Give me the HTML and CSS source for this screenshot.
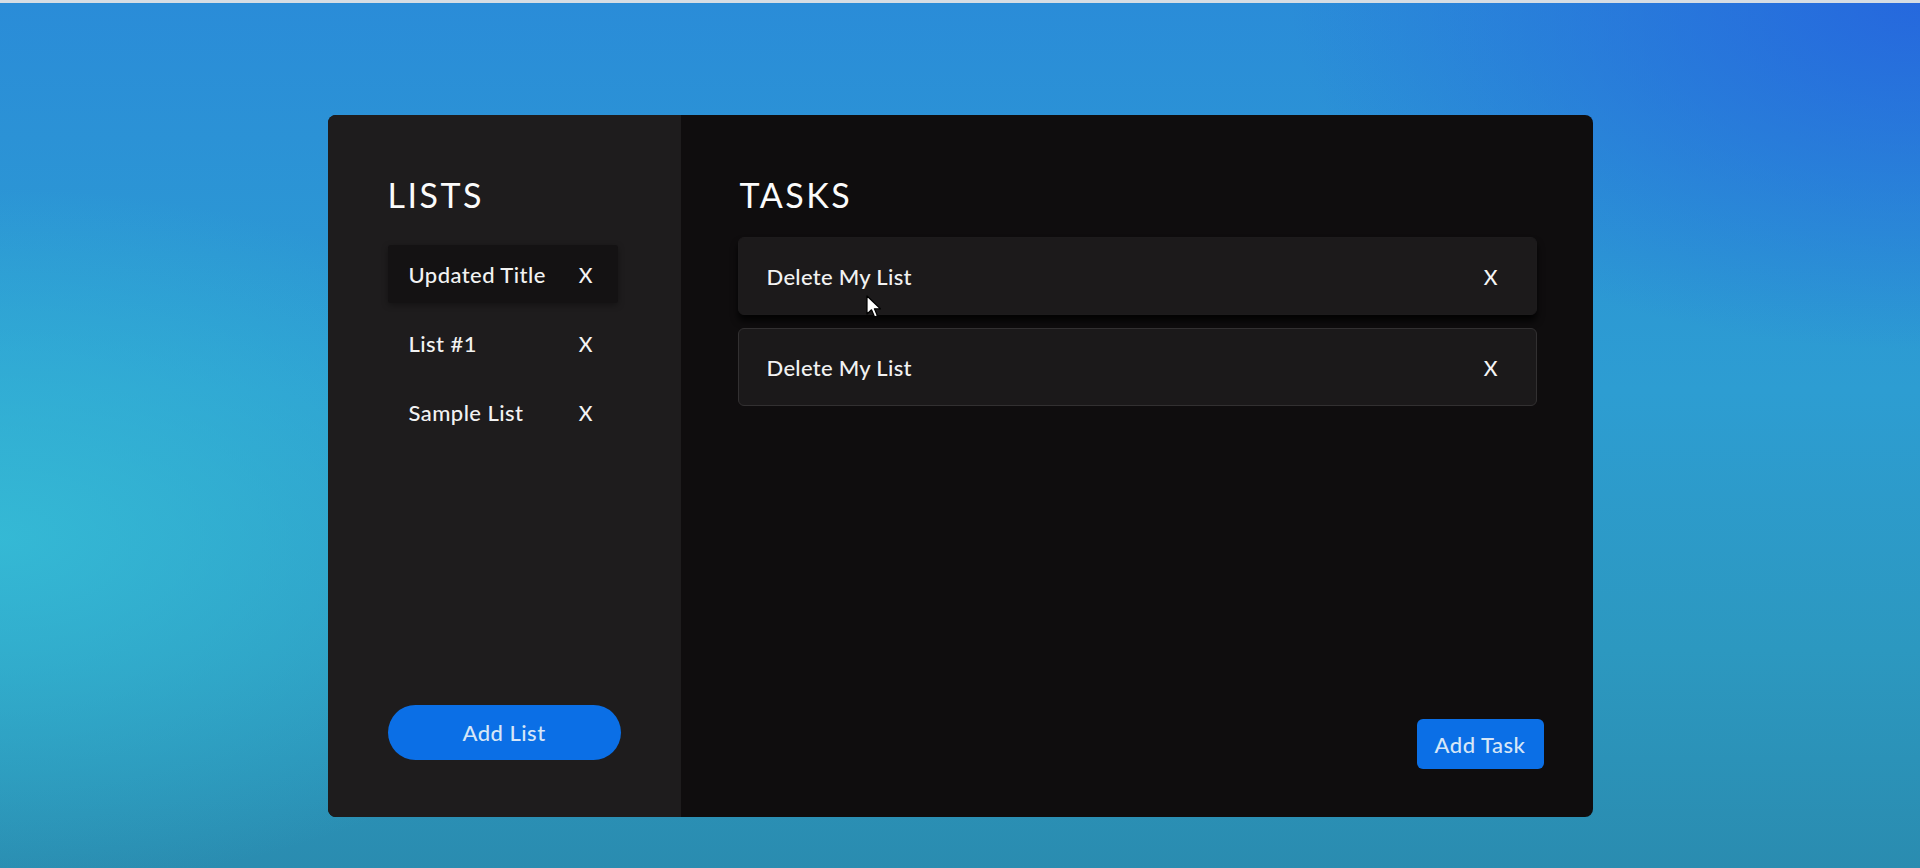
FILE: index.html
```html
<!DOCTYPE html>
<html lang="en">
<head>
<meta charset="utf-8">
<title>Task Manager</title>
<link rel="stylesheet" href="styles.css">
</head>
<body>
<div class="stage">
  <div class="app">
    <aside class="sidebar">
      <h1 class="title">LISTS</h1>
      <div class="lists">
        <div class="list-item active"><span>Updated Title</span><span class="x">X</span></div>
        <div class="list-item"><span>List #1</span><span class="x">X</span></div>
        <div class="list-item"><span>Sample List</span><span class="x">X</span></div>
      </div>
      <button class="btn-pill">Add List</button>
    </aside>
    <main class="tasks">
      <h1 class="title">TASKS</h1>
      <div class="task-list">
        <div class="task hover"><span>Delete My List</span><span class="x">X</span></div>
        <div class="task"><span>Delete My List</span><span class="x">X</span></div>
      </div>
      <button class="btn-rect">Add Task</button>
      <svg class="cursor" width="17" height="25" viewBox="0 0 17 25"><path d="M1 1 L1 19 L5.5 14.8 L8.6 22 L11.4 20.8 L8.4 13.8 L14.4 13.8 Z" fill="#fff" stroke="#000" stroke-width="1.2" stroke-linejoin="round"/></svg>
    </main>
  </div>
</div>
</body>
</html>
```
FILE: styles.css
```css
html, body {
  margin: 0;
  padding: 0;
  height: 100%;
}
body {
  font-family: "Lato", "Open Sans", sans-serif;
  color: #f2f2f2;
  background:
    radial-gradient(ellipse 900px 500px at 0% 62%, rgba(54, 190, 215, 0.85), rgba(54, 190, 215, 0) 70%),
    radial-gradient(ellipse 900px 500px at 100% 0%, rgba(37, 100, 222, 0.9), rgba(37, 100, 222, 0) 70%),
    linear-gradient(180deg, #2a8cd8 0%, #2d9dd2 45%, #2c98c0 75%, #2a8cb0 100%);
  border-top: 3px solid #d6dde4;
  box-sizing: border-box;
  overflow: hidden;
}
.stage {
  display: flex;
  justify-content: center;
  padding-top: 112px;
}
.app {
  display: flex;
  width: 1265px;
  height: 702px;
  border-radius: 8px;
  overflow: hidden;
  background: #0f0d0e;
}
.title {
  margin: 0;
  font-family: "Lato", sans-serif;
  font-weight: 400;
  font-size: 34px;
  line-height: 41px;
  letter-spacing: 2.5px;
  color: #fbfbfb;
}
.sidebar {
  width: 353px;
  box-sizing: border-box;
  background: #1e1c1d;
  padding: 59px 60px 57px 60px;
  display: flex;
  flex-direction: column;
}
.lists {
  margin-top: 30px;
  flex: 1;
  display: flex;
  flex-direction: column;
  gap: 11px;
}
.list-item {
  width: 230px;
  height: 58px;
  box-sizing: border-box;
  padding: 0 25px 0 21px;
  display: flex;
  align-items: center;
  justify-content: space-between;
  font-size: 22px;
  font-weight: 500;
  letter-spacing: 0.45px;
  border-radius: 3px;
}
.list-item.active {
  background: #141213;
  box-shadow: 0 2px 6px rgba(0, 0, 0, 0.35);
}
.x {
  font-family: "Lato", sans-serif;
  font-size: 21px;
  font-weight: 500;
  letter-spacing: 0;
  color: #f4f4f4;
}
.btn-pill {
  width: 233px;
  height: 55px;
  border: none;
  border-radius: 28px;
  background: #0b6fe6;
  color: #d6e6f7;
  font-family: "Lato", sans-serif;
  font-size: 22px;
  font-weight: 500;
  letter-spacing: 0.5px;
  cursor: pointer;
}
.tasks {
  position: relative;
  flex: 1;
  box-sizing: border-box;
  padding: 59px 56px 48px 57px;
  display: flex;
  flex-direction: column;
}
.tasks .title {
  margin-left: 2px;
}
.task-list {
  margin-top: 22px;
  flex: 1;
  display: flex;
  flex-direction: column;
  gap: 13px;
}
.task {
  height: 78px;
  box-sizing: border-box;
  padding: 0 38px 0 28px;
  display: flex;
  align-items: center;
  justify-content: space-between;
  font-size: 22px;
  font-weight: 500;
  letter-spacing: 0.3px;
  background: #1b191a;
  border: 1px solid #323031;
  border-radius: 6px;
}
.task.hover {
  height: 78px;
  border-color: #1d1b1c;
  background: #1c1a1b;
  box-shadow: 0 6px 7px rgba(0, 0, 0, 0.8);
}
.btn-rect {
  align-self: flex-end;
  margin-right: -7px;
  width: 127px;
  height: 50px;
  border: none;
  border-radius: 6px;
  background: #0b6fe6;
  color: #d6e6f7;
  font-family: "Lato", sans-serif;
  font-size: 22px;
  font-weight: 500;
  letter-spacing: 0.5px;
  cursor: pointer;
}
.cursor {
  position: absolute;
  left: 185px;
  top: 180px;
}
```
